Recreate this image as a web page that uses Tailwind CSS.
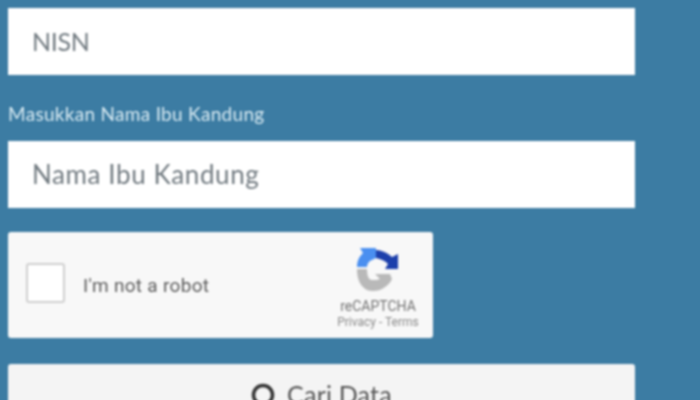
<!DOCTYPE html>
<html>
<head>
<meta charset="utf-8">
<script src="https://cdn.jsdelivr.net/npm/@tailwindcss/browser@4"></script>
</head>
<body class="m-0">
<div class="w-[700px] h-[400px] overflow-hidden bg-[#3c7ca3] font-['Lato',sans-serif]">
  <div class="w-[627px] ml-2 pt-2 flex flex-col blur-[0.8px]">
    <div class="h-[67px] bg-white flex items-center pl-[24px] text-[25px] text-[#717a80] tracking-[-0.3px]">NISN</div>
    <div class="h-[66px] flex items-end pb-[15px] text-[19px] leading-[24px] text-[#d8eaf2] tracking-[0.3px]">Masukkan Nama Ibu Kandung</div>
    <div class="h-[67px] bg-white flex items-center pl-[24px] text-[26px] text-[#717a80] tracking-[0.6px]">Nama Ibu Kandung</div>
    <div class="mt-[24px] w-[425px] h-[106px] bg-[#f8f8f8] rounded-[3px] flex items-center pl-[18px] pr-[15px] font-['Roboto',sans-serif]">
      <div class="w-[39px] h-[40px] mb-[5px] bg-white border-2 border-[#cfcfcf] rounded-[3px]"></div>
      <div class="ml-[18px] mt-[3px] text-[19px] text-[#5c5c5c] grow tracking-[0.3px]">I'm not a robot</div>
      <div class="w-[80px] self-start pt-[15px] flex flex-col items-center">
        <svg width="44" height="46" viewBox="0 0 44 46" class="mr-[2px]">
          <path d="M2 20C2 14 4 10 8 6L5 1H21V11L17 13C14 14 12 17 12 20Z" fill="#4a8ff0"/>
          <path d="M21 3C26 3 33 6 37 10L43 7V22H30L33 17C31 15 29 13 21 11Z" fill="#1c3fab"/>
          <path d="M2 22H12C12 27 13 33 17 33C20 33 23 33 25 32L20 27H35L37 32C35 36 33 38 30 40C26 43 22 44 18 44C14 44 11 43 8 40C4 36 2 30 2 22Z" fill="#b9b9b9"/>
        </svg>
        <div class="text-[14px] leading-[16px] text-[#737373] mt-[5px] whitespace-nowrap">reCAPTCHA</div>
        <div class="text-[12px] leading-[14px] text-[#8a8a8a] mt-[1px] whitespace-nowrap">Privacy - Terms</div>
      </div>
    </div>
    <div class="mt-[26px] h-[67px] bg-[#f4f4f4] rounded-[3px] flex justify-center items-start pt-[14px] gap-[10px] text-[25px] leading-[32px] text-[#555555] tracking-[0.2px]">
      <svg width="26" height="30" viewBox="0 0 26 30" fill="none" stroke="#333333" stroke-width="3.5" class="mt-[4px]"><circle cx="12" cy="13" r="9.5"/><path d="M18 20L24 28"/></svg>
      <span>Cari Data</span>
    </div>
  </div>
</div>
</body>
</html>
